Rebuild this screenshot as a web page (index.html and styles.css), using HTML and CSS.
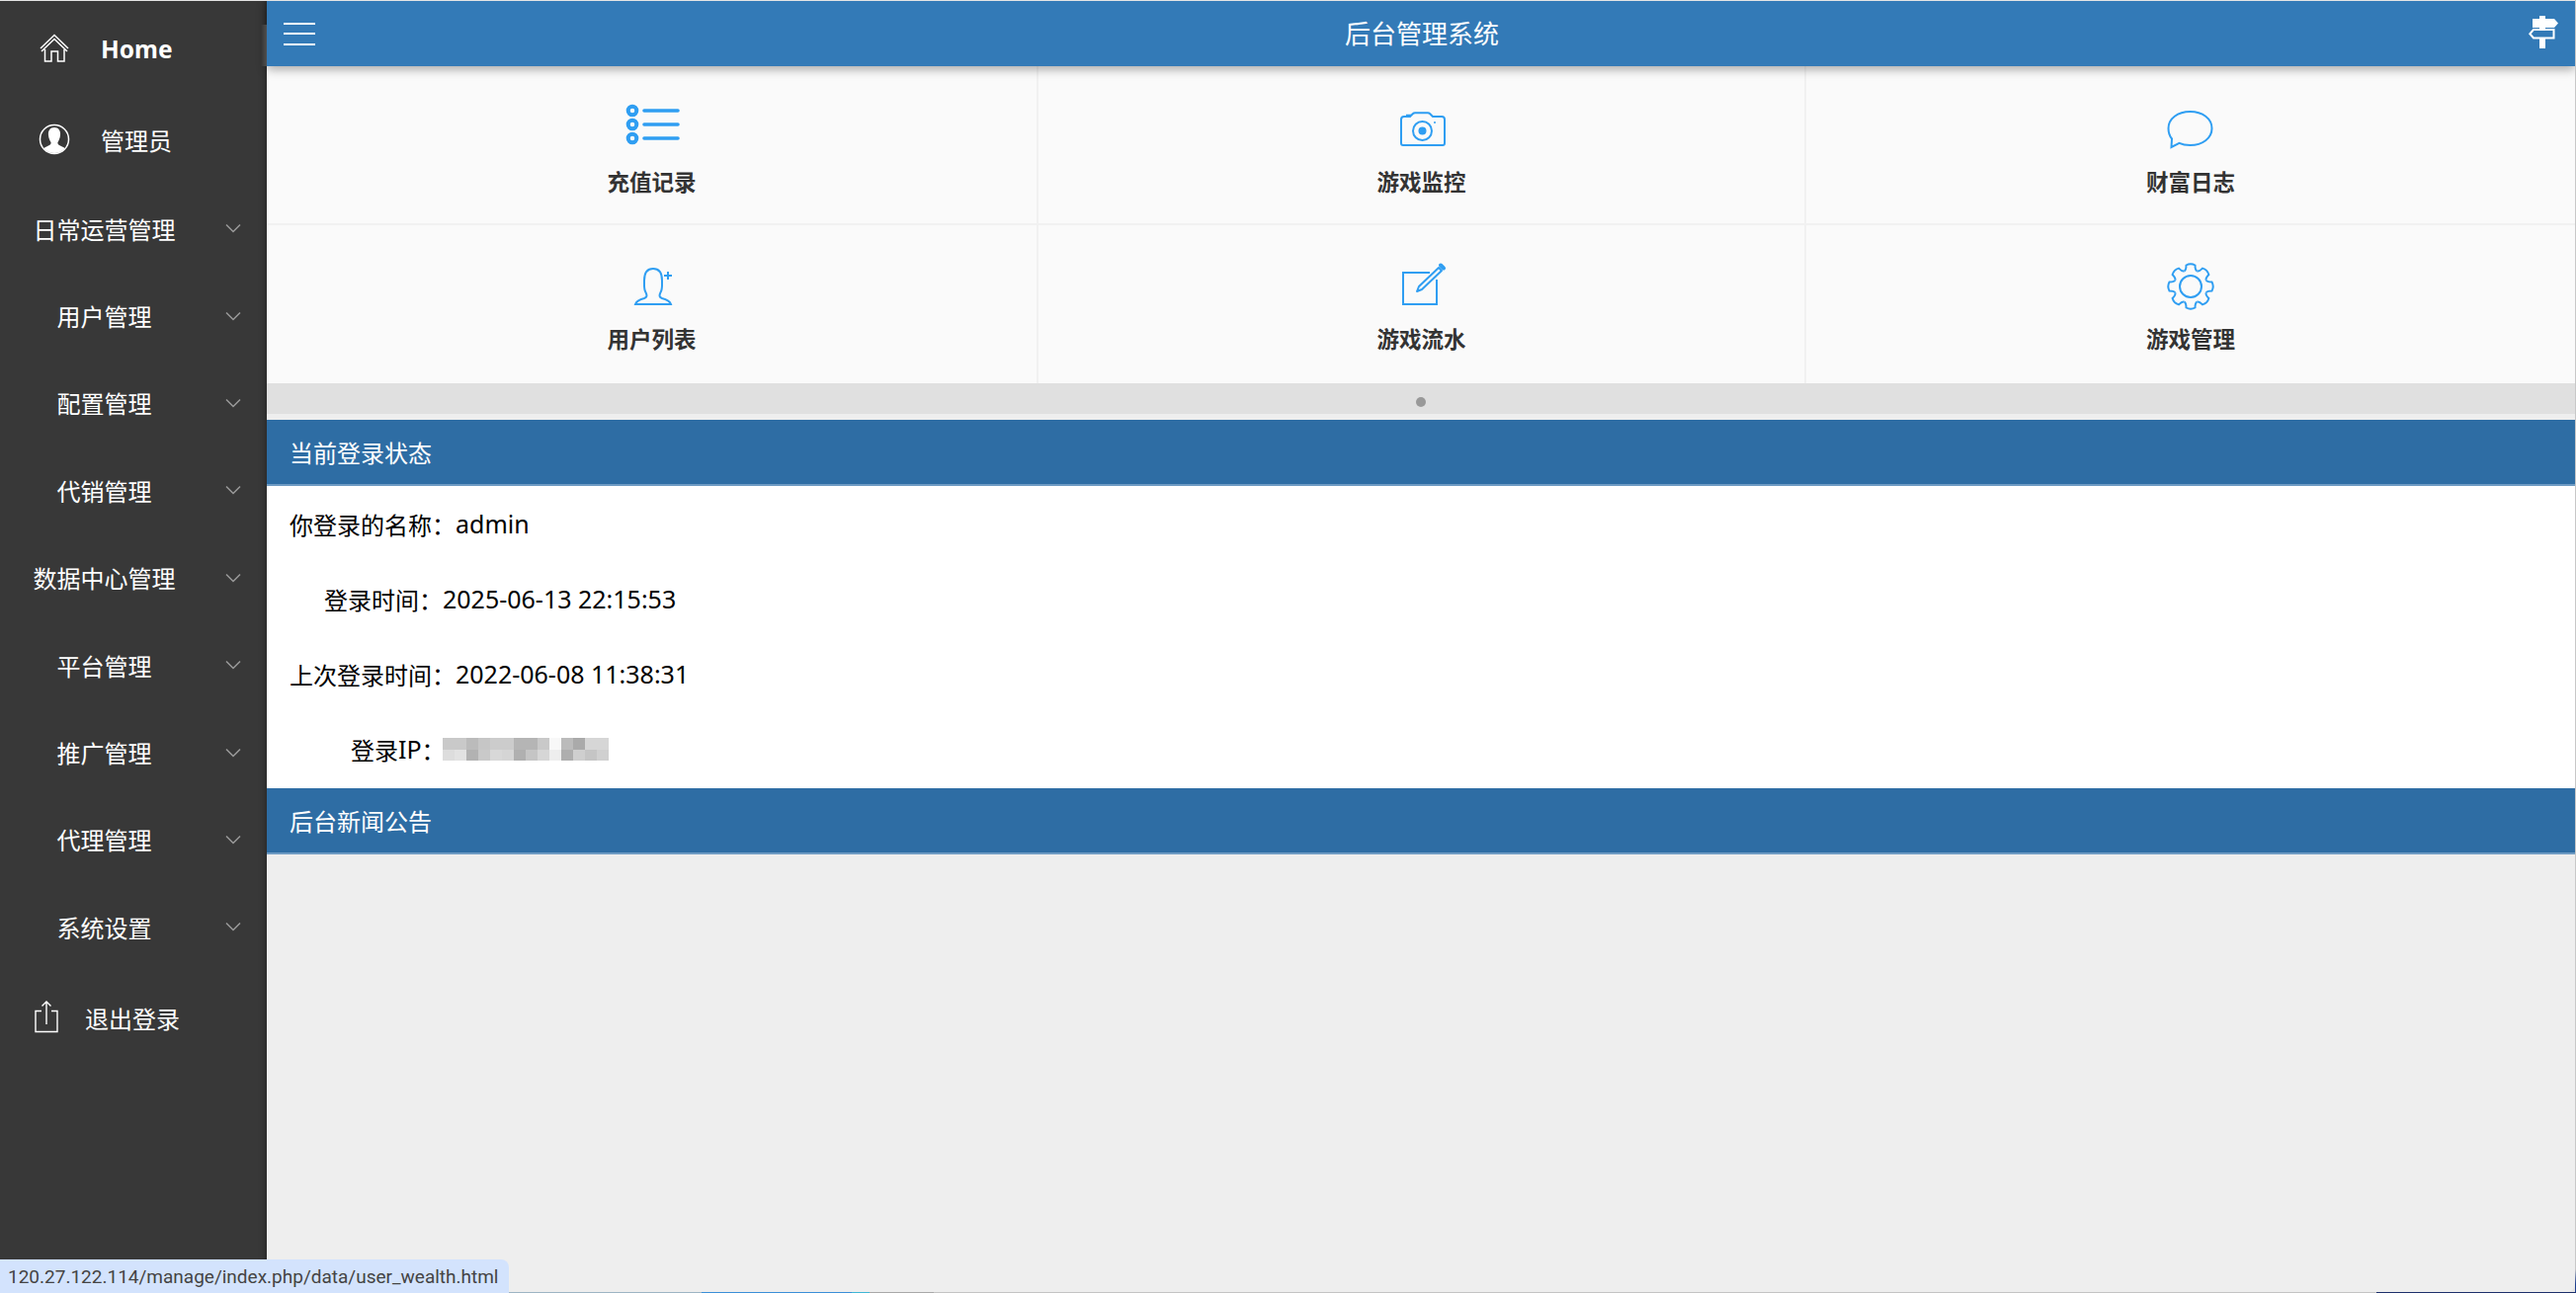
FILE: index.html
```html
<!DOCTYPE html>
<html lang="zh-CN">
<head>
<meta charset="utf-8">
<title>后台管理系统</title>
<link rel="stylesheet" href="styles.css">
</head>
<body>
<div class="app">
  <aside class="sidebar">
    <a class="nav-top nav-home">
      <svg class="nav-icon" width="40" height="40" viewBox="0 0 40 40"><path d="M6 20 L20 6.500 L34 20 M7 23 L20 10.500 L33 23 M10.500 21 V33 H17 V23 H23.500 V33 H30 V21" fill="none" stroke="#fff" stroke-width="1.500"/></svg>
      <span class="nav-home-text">Home</span>
    </a>
    <a class="nav-top">
      <svg class="nav-icon" width="40" height="40" viewBox="0 0 40 40"><defs><clipPath id="avatarClip"><circle cx="20" cy="20" r="14"/></clipPath></defs><circle cx="20" cy="20" r="14.500" fill="#383838" stroke="#fff" stroke-width="1.500"/><path clip-path="url(#avatarClip)" d="M20 8 C15.500 8 13.500 11.500 14 16 C14.300 19 15.500 21.500 16.500 23 C17 25 15.500 26 12 27.500 C8.500 29 7 31 7 36 H33 C33 31 31.500 29 28 27.500 C24.500 26 23 25 23.500 23 C24.500 21.500 25.700 19 26 16 C26.500 11.500 24.500 8 20 8 Z" fill="#fff"/></svg>
      <span>管理员</span>
    </a>
    <a class="nav-group"><span class="nav-label">日常运营管理</span><svg class="chevron" width="16" height="10" viewBox="0 0 16 10"><path d="M1 1.500 L8 8.500 L15 1.500" fill="none" stroke="#9a9a9a" stroke-width="1.500"/></svg></a>
    <a class="nav-group"><span class="nav-label">用户管理</span><svg class="chevron" width="16" height="10" viewBox="0 0 16 10"><path d="M1 1.500 L8 8.500 L15 1.500" fill="none" stroke="#9a9a9a" stroke-width="1.500"/></svg></a>
    <a class="nav-group"><span class="nav-label">配置管理</span><svg class="chevron" width="16" height="10" viewBox="0 0 16 10"><path d="M1 1.500 L8 8.500 L15 1.500" fill="none" stroke="#9a9a9a" stroke-width="1.500"/></svg></a>
    <a class="nav-group"><span class="nav-label">代销管理</span><svg class="chevron" width="16" height="10" viewBox="0 0 16 10"><path d="M1 1.500 L8 8.500 L15 1.500" fill="none" stroke="#9a9a9a" stroke-width="1.500"/></svg></a>
    <a class="nav-group"><span class="nav-label">数据中心管理</span><svg class="chevron" width="16" height="10" viewBox="0 0 16 10"><path d="M1 1.500 L8 8.500 L15 1.500" fill="none" stroke="#9a9a9a" stroke-width="1.500"/></svg></a>
    <a class="nav-group"><span class="nav-label">平台管理</span><svg class="chevron" width="16" height="10" viewBox="0 0 16 10"><path d="M1 1.500 L8 8.500 L15 1.500" fill="none" stroke="#9a9a9a" stroke-width="1.500"/></svg></a>
    <a class="nav-group"><span class="nav-label">推广管理</span><svg class="chevron" width="16" height="10" viewBox="0 0 16 10"><path d="M1 1.500 L8 8.500 L15 1.500" fill="none" stroke="#9a9a9a" stroke-width="1.500"/></svg></a>
    <a class="nav-group"><span class="nav-label">代理管理</span><svg class="chevron" width="16" height="10" viewBox="0 0 16 10"><path d="M1 1.500 L8 8.500 L15 1.500" fill="none" stroke="#9a9a9a" stroke-width="1.500"/></svg></a>
    <a class="nav-group"><span class="nav-label">系统设置</span><svg class="chevron" width="16" height="10" viewBox="0 0 16 10"><path d="M1 1.500 L8 8.500 L15 1.500" fill="none" stroke="#9a9a9a" stroke-width="1.500"/></svg></a>
    <a class="nav-logout">
      <svg class="logout-icon" width="26" height="34" viewBox="0 0 26 34"><path d="M8 11.500 H2 V32.500 H24 V11.500 H18 M13 25 V2 M8.500 6.500 L13 2 L17.500 6.500" fill="none" stroke="#fff" stroke-width="1.400"/></svg>
      <span>退出登录</span>
    </a>
  </aside>

  <main class="main">
    <header class="topbar">
      <button class="menu-btn" type="button" aria-label="菜单"><i></i><i></i><i></i></button>
      <h1 class="title">后台管理系统</h1>
      <svg class="sign-icon" width="30" height="33" viewBox="0 0 30 33"><path d="M11 0 H17 V3 H26 L30 7.500 L26 12 H17 V13 H11 V12 H4 V3 H11 Z M11 23 H17 V33 H11 Z" fill="#fff"/><path d="M5 14 H25.500 V22.500 H5 L1.300 18.250 Z" fill="none" stroke="#fff" stroke-width="2"/></svg>
    </header>

    <section class="shortcuts">
      <a class="shortcut">
        <svg class="shortcut-icon" width="60" height="60" viewBox="0 0 60 60"><g fill="none" stroke="#2f9ef2"><circle cx="10" cy="12" r="4.300" stroke-width="4"/><circle cx="10" cy="26" r="4.300" stroke-width="4"/><circle cx="10" cy="40" r="4.300" stroke-width="4"/><path d="M22 12 H56 M22 26 H56 M22 40 H56" stroke-width="3.600" stroke-linecap="round"/></g></svg>
        <span class="shortcut-label">充值记录</span>
      </a>
      <a class="shortcut">
        <svg class="shortcut-icon" width="60" height="60" viewBox="0 0 60 60"><path d="M9 21 a3 3 0 0 1 3-3 h6 l3-3 q.7-.7 2-.7 h13 q1.300 0 2 .7 l3 3 h9 a3 3 0 0 1 3 3 v24 a2 2 0 0 1-2 2 h-40 a2 2 0 0 1-2-2 z" fill="none" stroke="#2f9ef2" stroke-width="2"/><path d="M14 17 H19" stroke="#2f9ef2" stroke-width="2.500"/><circle cx="30.500" cy="32.500" r="9.500" fill="none" stroke="#2f9ef2" stroke-width="2"/><circle cx="30.500" cy="32.500" r="4" fill="#2f9ef2"/><circle cx="43" cy="24" r="1" fill="#2f9ef2"/></svg>
        <span class="shortcut-label">游戏监控</span>
      </a>
      <a class="shortcut">
        <svg class="shortcut-icon" width="60" height="60" viewBox="0 0 60 60"><path d="M11 40.500 C8.500 37.500 7.500 34 7.500 30 C7.500 20 17 13 29.500 13 S51.500 20 51.500 30 S42 47 29.500 47 c-4 0 -8 -.7 -11 -2.200 L10.500 49 Z" fill="none" stroke="#2f9ef2" stroke-width="2"/></svg>
        <span class="shortcut-label">财富日志</span>
      </a>
      <a class="shortcut">
        <svg class="shortcut-icon" width="60" height="60" viewBox="0 0 60 60"><path d="M13 48 c1-3 5-5 9-6 c3-1 3-3 1.500-6 C21.500 33 22 29 22 24 C22 16 25 12 31 12 S40 16 40 24 C40 29 40.500 33 38.500 36 c-1.500 3 -1.500 5 1.500 6 c4 1 8 3 9 6 Z" fill="none" stroke="#2f9ef2" stroke-width="2"/><path d="M42 19 H50 M46 15 V23" fill="none" stroke="#2f9ef2" stroke-width="2"/></svg>
        <span class="shortcut-label">用户列表</span>
      </a>
      <a class="shortcut">
        <svg class="shortcut-icon" width="60" height="60" viewBox="0 0 60 60"><path d="M38 16 H11 V48 H45 V23" fill="none" stroke="#2f9ef2" stroke-width="2"/><path d="M25 35 l2-5 L47 11 l3 3 L30 33 z" fill="none" stroke="#2f9ef2" stroke-width="2" stroke-linejoin="round"/><path d="M49 8.500 l3 3" stroke="#2f9ef2" stroke-width="4" stroke-linecap="round"/></svg>
        <span class="shortcut-label">游戏流水</span>
      </a>
      <a class="shortcut">
        <svg class="shortcut-icon" width="60" height="60" viewBox="0 0 60 60"><defs><path id="gearTooth" d="M23.500 14.300 Q25.500 13.500 25.500 8.500 Q30 6 34.500 8.500 Q34.500 13.500 36.500 14.300" fill="none" stroke="#2f9ef2" stroke-width="2"/></defs><use href="#gearTooth"/><use href="#gearTooth" transform="rotate(45 30 30)"/><use href="#gearTooth" transform="rotate(90 30 30)"/><use href="#gearTooth" transform="rotate(135 30 30)"/><use href="#gearTooth" transform="rotate(180 30 30)"/><use href="#gearTooth" transform="rotate(225 30 30)"/><use href="#gearTooth" transform="rotate(270 30 30)"/><use href="#gearTooth" transform="rotate(315 30 30)"/><circle cx="30" cy="30" r="11" fill="none" stroke="#2f9ef2" stroke-width="2"/></svg>
        <span class="shortcut-label">游戏管理</span>
      </a>
    </section>

    <div class="pager"><span class="pager-dot"></span></div>

    <section class="panel">
      <h2 class="panel-head">当前登录状态</h2>
      <div class="panel-body">
        <p class="info">你登录的名称：<span class="val">admin</span></p>
        <p class="info indent-time">登录时间：<span class="val">2025-06-13 22:15:53</span></p>
        <p class="info">上次登录时间：<span class="val">2022-06-08 11:38:31</span></p>
        <p class="info indent-ip">登录<span class="val">IP</span>：<svg class="blur-ip" width="168" height="23" viewBox="0 0 14 2" preserveAspectRatio="none" shape-rendering="crispEdges"><rect x="0" y="0" width="1" height="1" fill="#c9c9c9"/><rect x="1" y="0" width="1" height="1" fill="#c9c9c9"/><rect x="2" y="0" width="1" height="1" fill="#bbb"/><rect x="3" y="0" width="1" height="1" fill="#c6c6c6"/><rect x="4" y="0" width="1" height="1" fill="#ccc"/><rect x="5" y="0" width="1" height="1" fill="#ccc"/><rect x="6" y="0" width="1" height="1" fill="#b5b5b5"/><rect x="7" y="0" width="1" height="1" fill="#b5b5b5"/><rect x="8" y="0" width="1" height="1" fill="#c9c9c9"/><rect x="9" y="0" width="1" height="1" fill="#f8f8f8"/><rect x="10" y="0" width="1" height="1" fill="#bbb"/><rect x="11" y="0" width="1" height="1" fill="#aaa"/><rect x="12" y="0" width="1" height="1" fill="#d6d6d6"/><rect x="13" y="0" width="1" height="1" fill="#d6d6d6"/><rect x="0" y="1" width="1" height="1" fill="#ddd"/><rect x="1" y="1" width="1" height="1" fill="#e2e2e2"/><rect x="2" y="1" width="1" height="1" fill="#b2b2b2"/><rect x="3" y="1" width="1" height="1" fill="#c9c9c9"/><rect x="4" y="1" width="1" height="1" fill="#d8d8d8"/><rect x="5" y="1" width="1" height="1" fill="#d5d5d5"/><rect x="6" y="1" width="1" height="1" fill="#b0b0b0"/><rect x="7" y="1" width="1" height="1" fill="#c5c5c5"/><rect x="8" y="1" width="1" height="1" fill="#d6d6d6"/><rect x="9" y="1" width="1" height="1" fill="#eee"/><rect x="10" y="1" width="1" height="1" fill="#aeaeae"/><rect x="11" y="1" width="1" height="1" fill="#cfcfcf"/><rect x="12" y="1" width="1" height="1" fill="#c5c5c5"/><rect x="13" y="1" width="1" height="1" fill="#d0d0d0"/></svg></p>
      </div>
      <h2 class="panel-head">后台新闻公告</h2>
    </section>
  </main>
</div>
<div class="status-url">120.27.122.114/manage/index.php/data/user_wealth.html</div>
</body>
</html>
```

FILE: styles.css
```css
* { box-sizing: border-box; }
html, body { margin: 0; height: 100%; overflow: hidden; }
body {
  font-family: "Noto Sans", "Noto Sans CJK SC", sans-serif;
  color: #000;
  background:
    linear-gradient(to right, #9db4c4 710px, #3a8fd8 710px, #3a8fd8 862px, #3fb6d6 862px, #3fb6d6 880px, #a8a8a8 880px, #a8a8a8 945px, #c4c4c4 945px, #c4c4c4 2405px, #1d2f6b 2405px) bottom / 100% 1px no-repeat,
    linear-gradient(to bottom, #c8c8c8 1285px, #1d3f8f 1300px) right / 1px 100% no-repeat,
    #e4e4e4;
}
.app {
  display: flex;
  height: calc(100vh - 2px);
  margin: 1px 1px 1px 0;
  background: #eee;
  border-bottom-right-radius: 8px;
  overflow: hidden;
}
.sidebar {
  flex: 0 0 270px;
  display: flex;
  flex-direction: column;
  background: #383838;
  box-shadow: inset -7px 0 7px -6px rgba(0, 0, 0, .35);
  color: #fff;
  font-size: 24px;
  padding-top: 2px;
}
.nav-top {
  display: flex;
  align-items: center;
  height: 92px;
  padding-left: 35px;
  gap: 27px;
}
.nav-home-text { font-size: 24.500px; font-weight: 700; }
.nav-icon { flex: none; }
.nav-group {
  display: flex;
  align-items: center;
  height: 88.400px;
}
.nav-label { width: 211px; text-align: center; }
.chevron { flex: none; margin-left: 17px; }
.nav-logout {
  display: flex;
  align-items: center;
  height: 95px;
  padding-left: 34px;
  gap: 26px;
}
.logout-icon { flex: none; margin-top: -3px; }

.main {
  flex: 1;
  min-width: 0;
  display: flex;
  flex-direction: column;
}
.topbar {
  position: relative;
  z-index: 1;
  flex: none;
  display: flex;
  align-items: center;
  justify-content: space-between;
  height: 66px;
  padding: 0 17px;
  background: #337ab7;
  box-shadow: 0 3px 10px rgba(0, 0, 0, .35);
  color: #fff;
}
.topbar::before {
  content: "";
  position: absolute;
  top: 24px;
  bottom: 0;
  left: -6px;
  width: 6px;
  background: linear-gradient(to right, rgba(255, 255, 255, 0), rgba(255, 255, 255, .2));
}
.menu-btn {
  display: flex;
  flex-direction: column;
  gap: 8.500px;
  width: 32px;
  padding: 0;
  border: 0;
  background: none;
}
.menu-btn i { display: block; height: 2px; background: #fff; }
.title {
  margin: 0;
  font-size: 26px;
  font-weight: 400;
  line-height: 36px;
}
.sign-icon { margin-top: -3px; }

.shortcuts {
  flex: none;
  display: grid;
  grid-template-columns: 781px 777px 1fr;
  background: #fafafa;
}
.shortcut {
  display: flex;
  flex-direction: column;
  align-items: center;
  height: 160px;
  padding-top: 32px;
  border-right: 2px solid #f1f1f1;
}
.shortcut:nth-child(-n+3) {
  height: 161px;
  padding-top: 33px;
  border-bottom: 2px solid #f1f1f1;
}
.shortcut:nth-child(3n) { border-right: 0; }
.shortcut-icon { flex: none; }
.shortcut-label {
  margin-top: 9px;
  font-size: 22.500px;
  font-weight: 700;
  line-height: 32px;
  color: #333;
}
.shortcut:nth-child(n+4) .shortcut-label { margin-top: 8px; }
.pager {
  flex: none;
  display: flex;
  align-items: center;
  justify-content: center;
  height: 31px;
  background: #e0e0e0;
}
.pager-dot {
  width: 10px;
  height: 10px;
  margin-top: 6px;
  border-radius: 50%;
  background: #999;
}

.panel { margin-top: 6px; }
.panel-head {
  margin: 0;
  height: 67px;
  padding-left: 23px;
  background: #2e6da4;
  border-bottom: 2px solid #6e9bc3;
  color: #fff;
  font-size: 24px;
  font-weight: 400;
  line-height: 67px;
}
.panel-body {
  display: flex;
  flex-direction: column;
  height: 306px;
  padding: 0 0 0 23px;
  background: #fff;
}
.info {
  display: flex;
  flex: none;
  align-items: center;
  height: 76px;
  margin: 0;
  font-size: 24px;
  color: #000;
}
.val { font-size: 25px; }
.indent-time { padding-left: 35px; }
.indent-ip { padding-left: 62px; }
.blur-ip { flex: none; margin-left: -3px; }

.status-url {
  position: absolute;
  left: 0;
  bottom: 0;
  width: 515px;
  height: 34px;
  padding-left: 8px;
  background: #d3e3fd;
  border-top-right-radius: 8px;
  color: #444;
  font-family: Roboto, "Noto Sans", sans-serif;
  font-size: 19px;
  line-height: 35px;
  white-space: nowrap;
}
```
